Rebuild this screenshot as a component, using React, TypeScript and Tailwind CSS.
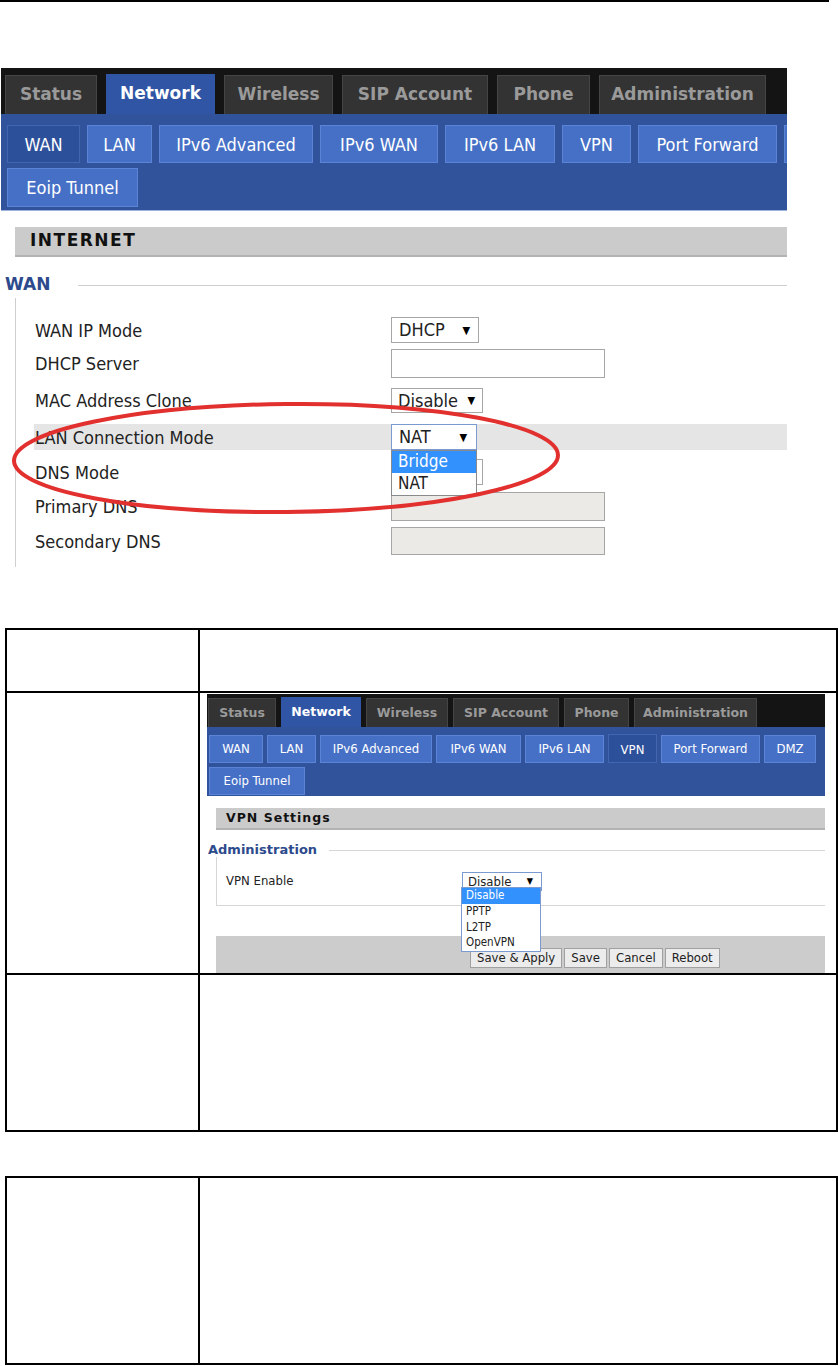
import React from "react";

type Tab = { label: string; w: string; active?: boolean };

const topTabsBig: Tab[] = [
  { label: "Status", w: "w-[92px]" },
  { label: "Network", w: "w-[109px]", active: true },
  { label: "Wireless", w: "w-[109px]" },
  { label: "SIP Account", w: "w-[146px]" },
  { label: "Phone", w: "w-[93px]" },
  { label: "Administration", w: "w-[167px]" },
];

const subTabsBig: Tab[] = [
  { label: "WAN", w: "w-[73px]", active: true },
  { label: "LAN", w: "w-[65px]" },
  { label: "IPv6 Advanced", w: "w-[154px]" },
  { label: "IPv6 WAN", w: "w-[118px]" },
  { label: "IPv6 LAN", w: "w-[110px]" },
  { label: "VPN", w: "w-[69px]" },
  { label: "Port Forward", w: "w-[139px]" },
  { label: "", w: "w-[70px]" },
];

const topTabsSmall: Tab[] = [
  { label: "Status", w: "w-[68px]" },
  { label: "Network", w: "w-[80px]", active: true },
  { label: "Wireless", w: "w-[82px]" },
  { label: "SIP Account", w: "w-[106px]" },
  { label: "Phone", w: "w-[65px]" },
  { label: "Administration", w: "w-[123px]" },
];

const subTabsSmall: Tab[] = [
  { label: "WAN", w: "w-[54px]" },
  { label: "LAN", w: "w-[49px]" },
  { label: "IPv6 Advanced", w: "w-[112px]" },
  { label: "IPv6 WAN", w: "w-[85px]" },
  { label: "IPv6 LAN", w: "w-[79px]" },
  { label: "VPN", w: "w-[49px]", active: true },
  { label: "Port Forward", w: "w-[99px]" },
  { label: "DMZ", w: "w-[52px]" },
];

const ui = "font-['Tahoma','DejaVu_Sans_Condensed','Liberation_Sans',sans-serif]";
const heavy = "font-['Verdana','DejaVu_Sans',sans-serif]";

function Select({ value, cls, arrow = "text-[11px]", blue = false }: { value: string; cls: string; arrow?: string; blue?: boolean }) {
  return (
    <div
      className={`flex items-center justify-between bg-white border ${blue ? "border-[#7b9bd0]" : "border-[#a6a6a6]"} ${cls}`}
    >
      <span className="leading-none">{value}</span>
      <span className={`${arrow} leading-none text-black`}>▼</span>
    </div>
  );
}

function WanScreen() {
  return (
    <div className={`relative ml-[1px] mt-[66px] w-[786px] ${ui}`}>
      {/* main tabs */}
      <div className="flex h-[46px] items-end gap-[9px] bg-[#141414] pl-[4px]">
        {topTabsBig.map((t) => (
          <div
            key={t.label}
            className={`${t.w} flex items-center justify-center ${heavy} text-[17px] font-bold ${
              t.active
                ? "h-[40px] bg-[#2f55a4] text-white"
                : "h-[39px] border border-b-0 border-[#454545] bg-[#333333] text-[#9a9a9a]"
            }`}
          >
            {t.label}
          </div>
        ))}
      </div>
      {/* sub tabs */}
      <div className="flex h-[97px] flex-col gap-[5px] overflow-hidden border-b border-[#9fb3da] bg-[#30539c] pl-[6px] pt-[11px]">
        <div className="flex gap-[7px]">
          {subTabsBig.map((t, i) => (
            <div
              key={i}
              className={`${t.w} flex h-[38px] shrink-0 items-center justify-center border text-[18px] text-white ${
                t.active ? "border-[#4266b2] bg-[#2d509b]" : "border-[#5b83d6] bg-[#4670c6]"
              }`}
            >
              {t.label}
            </div>
          ))}
        </div>
        <div className="flex">
          <div className="flex h-[39px] w-[131px] items-center justify-center border border-[#5b83d6] bg-[#4670c6] text-[18px] text-white">
            Eoip Tunnel
          </div>
        </div>
      </div>

      {/* section header */}
      <div className="ml-[14px] mt-[16px] flex h-[30px] items-center border-b-2 border-[#b3b3b3] bg-[#cbcbcb] pl-[15px]">
        <span className={`${heavy} text-[17px] font-bold tracking-[1.5px] text-[#111]`}>INTERNET</span>
      </div>

      {/* legend */}
      <div className="mt-[18px] flex h-[20px] items-center pl-[4px]">
        <span className={`${heavy} text-[17px] font-bold text-[#2c4a8c]`}>WAN</span>
        <div className="ml-[28px] h-px flex-1 bg-[#cfcfcf]" />
      </div>

      <div className="ml-[14px] mt-[3px] border-l border-[#cfcfcf] pb-[12px] pt-[19px] text-[18px] text-[#222]">
        <div className="ml-[18px] flex h-[26px] items-center">
          <span className="w-[357px] pl-[1px]">WAN IP Mode</span>
          <Select value="DHCP" cls="h-[26px] w-[88px] pl-[7px] pr-[8px]" />
        </div>
        <div className="ml-[18px] mt-[6px] flex h-[29px] items-center">
          <span className="w-[357px] pl-[1px]">DHCP Server</span>
          <div className="h-[29px] w-[214px] border border-[#a6a6a6] bg-white" />
        </div>
        <div className="ml-[18px] mt-[10px] flex h-[25px] items-center">
          <span className="w-[357px] pl-[1px]">MAC Address Clone</span>
          <Select value="Disable" cls="h-[25px] w-[92px] pl-[6px] pr-[7px]" />
        </div>
        <div className="ml-[18px] mt-[11px] flex h-[26px] items-center bg-[#e5e5e5]">
          <span className="w-[357px] pl-[1px]">LAN Connection Mode</span>
          <Select value="NAT" blue cls="h-[26px] w-[86px] pl-[7px] pr-[9px]" />
        </div>
        <div className="ml-[18px] mt-[9px] flex h-[26px] items-center">
          <span className="w-[357px] pl-[1px]">DNS Mode</span>
          <div className="h-[26px] w-[92px] border border-[#a6a6a6] bg-white" />
        </div>
        <div className="ml-[18px] mt-[7px] flex h-[29px] items-center">
          <span className="w-[357px] pl-[1px]">Primary DNS</span>
          <div className="h-[29px] w-[214px] border border-[#a6a6a6] bg-[#ebeae6]" />
        </div>
        <div className="ml-[18px] mt-[6px] flex h-[28px] items-center">
          <span className="w-[357px] pl-[1px]">Secondary DNS</span>
          <div className="h-[28px] w-[214px] border border-[#a6a6a6] bg-[#ebeae6]" />
        </div>
      </div>

      {/* open dropdown */}
      <div className="absolute left-[390px] top-[382px] w-[86px] border border-[#8a8a8a] bg-white text-[17px] text-[#222]">
        <div className="flex h-[22px] items-center bg-[#3391fd] pl-[6px] text-white">Bridge</div>
        <div className="flex h-[22px] items-center pl-[6px]">NAT</div>
      </div>

      {/* red annotation ring */}
      <svg className="pointer-events-none absolute left-[-1px] top-[327px]" width="580" height="130" viewBox="0 0 580 130">
        <ellipse cx="286" cy="63" rx="272" ry="54" fill="none" stroke="#e2302f" strokeWidth="4" transform="rotate(-0.6 286 63)" />
      </svg>
    </div>
  );
}

function VpnScreen() {
  return (
    <div className={`relative ml-[7px] mt-[1px] w-[618px] ${ui}`}>
      <div className="flex h-[33px] items-end gap-[5px] bg-[#141414] pl-[1px]">
        {topTabsSmall.map((t) => (
          <div
            key={t.label}
            className={`${t.w} flex items-center justify-center ${heavy} text-[12.5px] font-bold ${
              t.active
                ? "h-[30px] bg-[#2f55a4] text-white"
                : "h-[29px] border border-b-0 border-[#454545] bg-[#333333] text-[#9a9a9a]"
            }`}
          >
            {t.label}
          </div>
        ))}
      </div>
      <div className="flex h-[69px] flex-col gap-[4px] bg-[#30539c] pl-[2px] pt-[7px]">
        <div className="flex items-end gap-[4px]">
          {subTabsSmall.map((t) => (
            <div
              key={t.label}
              className={`${t.w} flex shrink-0 justify-center border text-[13px] text-white ${
                t.active
                  ? "h-[29px] items-start border-[#4266b2] bg-[#2d509b] pt-[5px]"
                  : "h-[28px] items-center border-[#5b83d6] bg-[#4670c6]"
              }`}
            >
              {t.label}
            </div>
          ))}
        </div>
        <div className="flex">
          <div className="flex h-[28px] w-[96px] items-center justify-center border border-[#5b83d6] bg-[#4670c6] text-[13px] text-white">
            Eoip Tunnel
          </div>
        </div>
      </div>

      <div className="ml-[9px] mt-[12px] flex h-[22px] items-center border-b-2 border-[#b3b3b3] bg-[#cbcbcb] pl-[10px]">
        <span className={`${heavy} text-[12.5px] font-bold tracking-[1px] text-[#111]`}>VPN Settings</span>
      </div>

      <div className="mt-[12px] flex h-[16px] items-center pl-[1px]">
        <span className={`${heavy} text-[13px] font-bold text-[#2c4a8c]`}>Administration</span>
        <div className="ml-[12px] h-px flex-1 bg-[#d6d6d6]" />
      </div>

      <div className="ml-[9px] mt-[-1px] flex h-[49px] items-center border-b border-l border-[#d6d6d6] pl-[9px] text-[13px] text-[#222]">
        <span className="w-[236px]">VPN Enable</span>
        <Select value="Disable" blue arrow="text-[9px]" cls="h-[19px] w-[80px] pl-[5px] pr-[8px]" />
      </div>

      <div className="ml-[9px] mt-[30px] flex h-[37px] items-start bg-[#cccccc] pl-[254px] pt-[12px] text-[13px] text-[#222]">
        {["Save & Apply", "Save", "Cancel", "Reboot"].map((b) => (
          <div key={b} className="mr-[2px] flex h-[20px] items-center border border-[#a0a0a0] bg-[#ececec] px-[6px]">
            {b}
          </div>
        ))}
      </div>

      <div className="absolute left-[254px] top-[193px] w-[80px] border border-[#7b9bd0] bg-white text-[11.5px] text-[#222]">
        <div className="flex h-[16px] items-center bg-[#3391fd] pl-[4px] text-white">Disable</div>
        <div className="flex h-[16px] items-center pl-[4px]">PPTP</div>
        <div className="flex h-[15px] items-center pl-[4px]">L2TP</div>
        <div className="flex h-[16px] items-center pl-[4px]">OpenVPN</div>
      </div>
    </div>
  );
}

export default function App() {
  return (
    <div className="h-[1366px] w-[838px] overflow-hidden bg-white">
      <div className="h-[2px] w-[829px] bg-black" />
      <WanScreen />

      <div className="ml-[5px] mt-[61px] w-[833px] border-2 border-b-0 border-black">
        <div className="flex h-[63px] border-b-2 border-black">
          <div className="w-[193px] border-r-2 border-black" />
          <div className="flex-1" />
        </div>
        <div className="flex h-[282px] border-b-2 border-black">
          <div className="w-[193px] border-r-2 border-black" />
          <div className="flex-1">
            <VpnScreen />
          </div>
        </div>
        <div className="flex h-[157px] border-b-2 border-black">
          <div className="w-[193px] border-r-2 border-black" />
          <div className="flex-1" />
        </div>
      </div>

      <div className="ml-[5px] mt-[44px] flex h-[189px] w-[833px] border-2 border-black">
        <div className="w-[193px] border-r-2 border-black" />
        <div className="flex-1" />
      </div>
    </div>
  );
}
